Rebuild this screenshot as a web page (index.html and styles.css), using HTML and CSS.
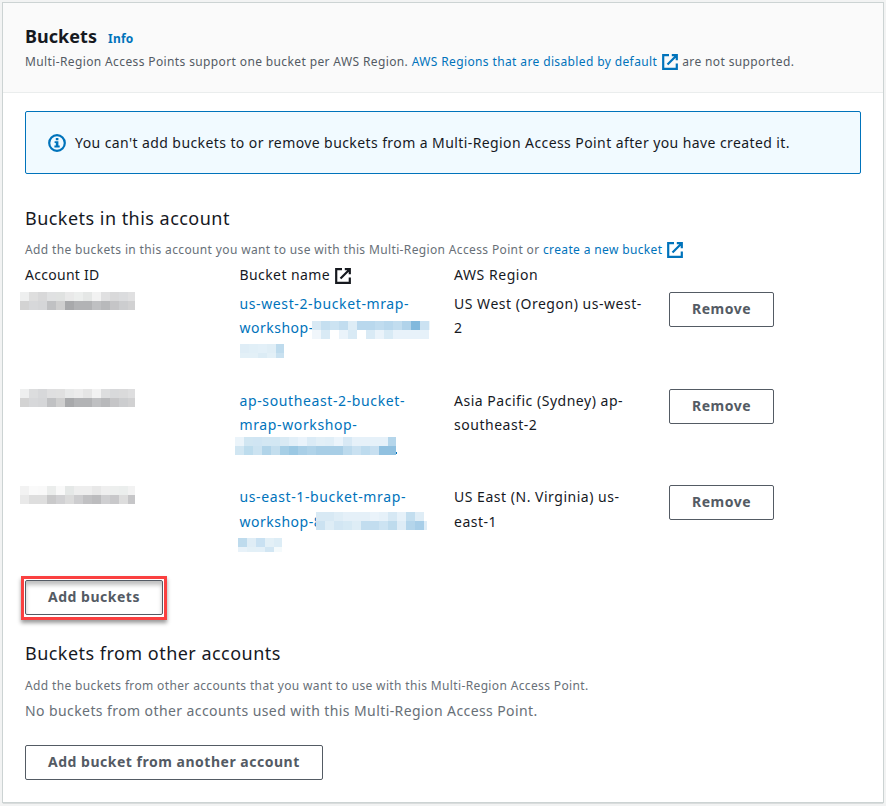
FILE: index.html
```html
<!DOCTYPE html>
<html lang="en">
<head>
<meta charset="utf-8">
<title>Buckets</title>
<link rel="stylesheet" href="styles.css">
</head>
<body>
<svg width="0" height="0" class="defs">
  <symbol id="external" viewBox="0 0 16 16">
    <path d="M7 1.2H1.2v13.6h13.6V9.5M9.8 1.2h5v5M14.5 1.5 5.5 10.5" fill="none" stroke="currentColor" stroke-width="2.2"/>
  </symbol>
</svg>
<main class="panel">
  <header class="panel-header">
    <div class="title-row"><h1>Buckets</h1><a class="info">Info</a></div>
    <p class="small">Multi-Region Access Points support one bucket per AWS Region. <a>AWS Regions that are disabled by default <svg class="ext"><use href="#external"/></svg></a> are not supported.</p>
  </header>
  <div class="panel-body">
    <div class="alert">
      <svg class="alert-icon" viewBox="0 0 18 18"><circle cx="9" cy="9" r="7.8" fill="none" stroke="currentColor" stroke-width="2.2"/><path d="M7.8 4h2.6v2.2H7.8zM6.6 7.2h3.8v4.4h1.3v1.9H6.4v-1.9h1.4V9.1H6.6z" fill="currentColor"/></svg>
      <span>You can't add buckets to or remove buckets from a Multi-Region Access Point after you have created it.</span>
    </div>
    <section class="own">
      <h2>Buckets in this account</h2>
      <p class="small muted">Add the buckets in this account you want to use with this Multi-Region Access Point or <a>create a new bucket <svg class="ext"><use href="#external"/></svg></a></p>
      <div class="grid head">
        <div class="tight">Account ID</div><div>Bucket name <svg class="ext"><use href="#external"/></svg></div><div class="wide">AWS Region</div>
      </div>
      <div class="grid row">
        <div class="cell"><i class="mask account" data-w="115" data-h="18" data-px="eeefef dedede d8d8d9 e0e1e2 e0e2e1 e9e9e9 eceeed e5e7e6 f2f2f2 e0e0e1 d9d9da dbdcde e0e0e1|d3d3d3 d7d8da d5d6d8 c0c1c3 cfcfcf a8a9ab b2b3b5 b2b3b5 bfc0c2 b8b9bb c5c5c7 cccdcf d1d1d2"></i></div>
        <div class="cell"><a>us-west-2-bucket-mrap-<br><span class="stem">workshop-</span></a><i class="mask m1" data-w="118" data-h="18" data-px="d8e9f4 c5dff0 cce3f2 c2ddef deedf6 b9d8ed b9d8ed c0dcef b9d8ed c2ddef b1d3ea 82b9dd cbe2f2 edf5fa|f0f6fb d9eaf5 ffffff eaf3fa d9eaf5 ffffff d9eaf5 eaf3fa d8eaf5 e8f2fa e8f2fa e8f2fa e6f1f9 ffffff"></i><i class="mask m2" data-w="44" data-h="14" data-px="dfedf6 e1eff7 e3f0f8 e0eef6 bedbed|e3f0f7 e3f0f7 dcecf5 e3f0f7 c9e1f0"></i></div>
        <div class="cell">US West (Oregon) us-west-<br>2</div>
        <div><button>Remove</button></div>
      </div>
      <div class="grid row">
        <div class="cell"><i class="mask account" data-w="115" data-h="18" data-px="eeefef dcddde d7d8da dfdfe0 e0e0e0 e8e9e9 ececec e5e5e5 f2f2f2 dddedf d8d9db dadadb dededf|d3d3d3 d7d8da d5d6d8 c0c1c3 cfcfcf a8a9ab b2b3b5 b2b3b5 bfc0c2 b8b9bb c5c5c7 cccdcf d1d1d2"></i></div>
        <div class="cell"><a>ap-southeast-2-bucket-<br>mrap-workshop-</a><i class="mask m3" data-w="161" data-h="18" data-px="ebf4fa d1e6f2 d0e5f3 d3e7f3 d2e7f3 d9eaf4 e2eff8 eaf3fb dbebf6 e2eff7 e0eef7 ebf4fb d8e9f5 e6f1f9 e6f1f9 e6f1f9 e6f1f9 b5d6eb|d1e6f2 bddced cce3f1 b1d4e9 c3deee a7cfe6 9bc8e3 a9cfe7 b0d3e9 a8cee6 a8cee6 a8cee6 bcdaed c9e1f1 bddbee c7dff0 91c1e0 91c1e0"></i><i class="edge"></i></div>
        <div class="cell">Asia Pacific (Sydney) ap-<br>southeast-2</div>
        <div><button>Remove</button></div>
      </div>
      <div class="grid row">
        <div class="cell"><i class="mask account last" data-w="115" data-h="18" data-px="f2f2f2 fafafa f9f9f9 ebedec f9f9f9 e5e8e7 eeeeee eeeeee e8e8e8 efefef edefee ebeeed f2f2f2|e9e9e9 dedede dedede c9c9ca d1d1d3 dbdbdb cdcdcf c1c1c3 bcbcbe cfcfd1 c8c8ca dddddd c6c6c8"></i></div>
        <div class="cell"><a>us-east-1-bucket-mrap-<br><span class="stem lower">workshop-8</span></a><i class="mask m4" data-w="111" data-h="18" data-px="d8e9f4 d8e9f4 dfedf6 e5f0f8 e5f0f8 e5f0f8 eaf3fa e6f1f9 d6e8f4 e6f1f9 c3deef dfedf6 ffffff|cbe2f1 deedf6 d2e6f3 d6e9f4 deedf6 c2ddef c2ddef cce3f2 bedbed deecf6 b4d5eb a8cee8 dfedf7"></i><i class="mask m5" data-w="44" data-h="14" data-px="bedbed dfedf6 c9e1f2 e3f0f7 ddedf6|e8f2f9 e3f0f7 e3f0f8 d2e6f3 f4fafc"></i></div>
        <div class="cell">US East (N. Virginia) us-<br><span class="lower">east-1</span></div>
        <div><button>Remove</button></div>
      </div>
      <div class="highlight"><button>Add buckets</button></div>
    </section>
    <section class="others">
      <h2>Buckets from other accounts</h2>
      <p class="small muted">Add the buckets from other accounts that you want to use with this Multi-Region Access Point.</p>
      <p class="empty">No buckets from other accounts used with this Multi-Region Access Point.</p>
      <button>Add bucket from another account</button>
    </section>
  </div>
</main>
<script src="masks.js"></script>
</body>
</html>
```
FILE: masks.js
```js
// Fill each redaction mask with its mosaic of 9px blocks.
document.querySelectorAll(".mask").forEach(function (mask) {
  mask.style.width = mask.dataset.w + "px";
  mask.style.height = mask.dataset.h + "px";
  mask.dataset.px.split("|").forEach(function (line) {
    var row = document.createElement("span");
    row.className = "mask-row";
    line.split(" ").forEach(function (color) {
      var block = document.createElement("span");
      block.className = "block";
      block.style.background = "#" + color;
      row.appendChild(block);
    });
    mask.appendChild(row);
  });
});
```
FILE: styles.css
```css
* { box-sizing: border-box; }
body {
  margin: 0;
  padding: 3px;
  height: 806px;
  overflow: hidden;
  background: #f2f3f3;
  color: #16191f;
  font: 14px/24px "Noto Sans", sans-serif;
  letter-spacing: .41px;
}
h1, h2, p { margin: 0; }
a { color: #0073bb; }
.defs { position: absolute; }
.panel {
  height: 799px;
  background: #fff;
  box-shadow: 0 0 0 1px #ccd3d3, 0 1px 1px 0 #5f6b6b;
}
.panel-header {
  height: 90px;
  padding: 21px 22px 0;
  background: #fafafa;
  border-bottom: 1px solid #eaeded;
}
.title-row { display: flex; align-items: baseline; gap: 11px; height: 28px; }
h1 { font-size: 18px; line-height: 24px; font-weight: 700; letter-spacing: .04px; }
.info { font-size: 12px; line-height: 20px; font-weight: 700; letter-spacing: .22px; }
.small { font-size: 12px; line-height: 20px; letter-spacing: .36px; color: #545b64; white-space: nowrap; }
.panel-header .small { letter-spacing: .376px; }
.panel-header .small .ext { margin: 0 1px; }
.muted, .empty { color: #687078; }
.ext { width: 16px; height: 16px; margin-left: 1px; vertical-align: -4px; }
.panel-body { padding: 18px 22px 0; }
.alert {
  display: flex;
  align-items: center;
  gap: 9px;
  height: 63px;
  padding-left: 22px;
  background: #f1faff;
  border: 1px solid #0073bb;
  border-radius: 2px;
}
.alert-icon { width: 18px; height: 18px; color: #0073bb; }
.own { padding-top: 32px; }
h2 { font-size: 18px; line-height: 24px; font-weight: 400; letter-spacing: .47px; }
h2 + .small { margin-top: 10px; }
.grid { display: grid; grid-template-columns: 214.5px 214.5px 215px 1fr; }
.head { height: 29px; margin-top: 3px; }
.tight { letter-spacing: .28px; }
.wide { letter-spacing: .55px; }
.row { height: 97px; }
.row + .row + .row { height: 95px; }
.head + .row + .row { height: 96px; }
.cell { position: relative; letter-spacing: .52px; }
.cell a { letter-spacing: .62px; }
.stem { letter-spacing: .5px; }
.lower { position: relative; top: 1px; }
button {
  display: block;
  height: 35px;
  padding: 0 22px 2px;
  background: #fff;
  border: 1px solid #545b64;
  border-radius: 2px;
  color: #545b64;
  font: 700 14px/22px "Noto Sans", sans-serif;
  letter-spacing: .51px;
}
.row button { width: 105px; padding: 0 0 2px; }
.highlight {
  width: 146px;
  height: 44px;
  margin: -4px 0 0 -4px;
  padding: 1px;
  border: 3px solid #fa4040;
  box-shadow: 0 3px 4px rgba(0, 0, 0, .4);
}
.highlight button { width: 138px; height: 35px; padding: 0 0 2px; box-shadow: inset 0 4px 4px rgba(0, 0, 0, .25); }
.others { padding-top: 21px; }
.others h2 + .small { margin-top: 11px; }
.empty { margin: 3px 0 22px; }
.mask { position: absolute; display: flex; flex-direction: column; overflow: hidden; }
.mask-row { display: flex; flex: 0 0 9px; }
.block { flex: 0 0 9px; height: 9px; }
.account { left: -5px; top: 0; }
.account.last { top: 1px; }
.m1 { left: 72px; top: 29px; }
.m2 { left: .5px; top: 52px; }
.m3 { left: -4.5px; top: 48px; }
.m4 { left: 76.5px; top: 27px; }
.m5 { left: -1.5px; top: 53px; }
.edge { position: absolute; left: 156.5px; top: 63px; width: 1px; height: 2px; background: #0073bb; }
```
